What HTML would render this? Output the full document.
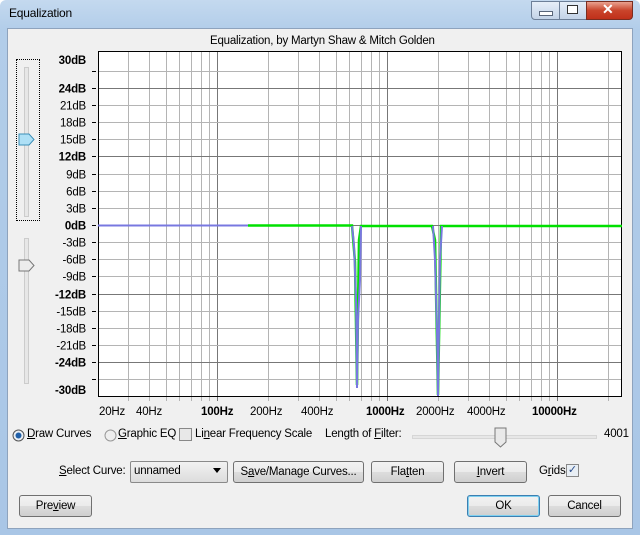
<!DOCTYPE html>
<html><head><style>
body{margin:0;width:640px;height:535px;overflow:hidden;background:#fff;font-family:"Liberation Sans",sans-serif;font-size:12px;position:relative}
.a{position:absolute}
.btn{position:absolute;height:20px;border:1px solid #707070;border-radius:3px;background:linear-gradient(#f2f2f2,#ebebeb 50%,#dddddd 51%,#cfcfcf);text-align:center;line-height:20px;font-size:11.5px;letter-spacing:-0.2px;color:#000;box-sizing:content-box}
.t{position:absolute;font-size:11.5px;letter-spacing:-0.2px;white-space:nowrap}
u{text-decoration:underline}
</style></head><body>
<div class="a" style="left:0;top:0;width:640px;height:535px;background:linear-gradient(#c4d9ef,#b2cde9 30px,#a9c6e6);border-radius:6px 6px 0 0"></div>
<div class="t" style="left:9px;top:6px;font-size:12px">Equalization</div>
<div class="a" style="left:531px;top:1px;width:28px;height:17px;border:1px solid #6d7f98;border-radius:0 0 0 4px;background:linear-gradient(#e6eef8,#c3d3e8)"></div>
<div class="a" style="left:539px;top:11px;width:12px;height:3px;background:#fff;border:1px solid #59667a"></div>
<div class="a" style="left:559px;top:1px;width:26px;height:17px;border:1px solid #6d7f98;background:linear-gradient(#e6eef8,#c3d3e8)"></div>
<div class="a" style="left:567px;top:5px;width:9px;height:7px;border:1px solid #333;background:#fff"></div>
<div class="a" style="left:586px;top:1px;width:45px;height:17px;border:1px solid #7a2d20;border-radius:0 0 4px 0;background:linear-gradient(#e9a18f,#c9442b 50%,#c0301a)"></div>
<div class="t" style="left:602px;top:1px;color:#fff;font-weight:bold;font-size:14px">✕</div>
<div class="a" style="left:7px;top:28px;width:624px;height:499px;background:#f0f0f0;border:1px solid #8ea3bd"></div>
<div class="t" style="left:210px;top:35px">Equalization, by Martyn Shaw &amp; Mitch Golden</div>
<div class="a" style="left:16px;top:59px;width:22px;height:160px;border:1px dotted #000"></div>
<div class="a" style="left:24px;top:67px;width:3px;height:148px;border:1px solid #ccc;background:#e7e7e7"></div>
<svg class="a" style="left:17px;top:133px" width="20" height="14"><path d="M2 1H12L17 6.5L12 12H2Z" fill="#aee0f6" stroke="#3c8fb8"/></svg>
<div class="a" style="left:24px;top:238px;width:3px;height:144px;border:1px solid #ccc;background:#e7e7e7"></div>
<svg class="a" style="left:17px;top:259px" width="20" height="14"><path d="M2 1H12L17 6.5L12 12H2Z" fill="#ececec" stroke="#777"/></svg>
<svg class="a" style="left:0;top:0" width="640" height="430" id="g"></svg>
<svg class="a" style="left:12px;top:429px" width="13" height="13"><circle cx="6.5" cy="6.5" r="5.5" fill="#e8eef4" stroke="#555"/><circle cx="6.5" cy="6.5" r="3" fill="#1f5fa8"/></svg>
<div class="t" style="left:27px;top:428px"><u>D</u>raw Curves</div>
<svg class="a" style="left:104px;top:429px" width="13" height="13"><circle cx="6.5" cy="6.5" r="5.5" fill="#eee" stroke="#999"/></svg>
<div class="t" style="left:118px;top:428px"><u>G</u>raphic EQ</div>
<div class="a" style="left:179px;top:428px;width:11px;height:11px;border:1px solid #888;background:#e8e8e8"></div>
<div class="t" style="left:195px;top:428px">Li<u>n</u>ear Frequency Scale</div>
<div class="t" style="left:325px;top:428px">Length of <u>F</u>ilter:</div>
<div class="a" style="left:412px;top:435px;width:183px;height:2px;border:1px solid #d6d6d6;background:#e7e7e7"></div>
<svg class="a" style="left:494px;top:427px" width="14" height="22"><path d="M1 1H12V15L6.5 20L1 15Z" fill="#e9e9e9" stroke="#777"/></svg>
<div class="t" style="left:604px;top:428px">4001</div>
<div class="t" style="left:59px;top:465px"><u>S</u>elect Curve:</div>
<div class="a" style="left:130px;top:461px;width:96px;height:20px;border:1px solid #8a8a8a;border-radius:2px;background:linear-gradient(#f2f2f2,#dcdcdc)"></div>
<div class="t" style="left:134px;top:465px">unnamed</div>
<svg class="a" style="left:213px;top:468px" width="9" height="6"><path d="M0 0H8L4 5Z" fill="#000"/></svg>
<div class="btn" style="left:233px;top:461px;width:129px">S<u>a</u>ve/Manage Curves...</div>
<div class="btn" style="left:371px;top:461px;width:71px">Fla<u>t</u>ten</div>
<div class="btn" style="left:454px;top:461px;width:71px"><u>I</u>nvert</div>
<div class="t" style="left:539px;top:465px">G<u>r</u>ids</div>
<div class="a" style="left:566px;top:464px;width:11px;height:11px;border:1px solid #888;background:#e8eef4;font-size:11px;line-height:11px;color:#2a4d8c;text-align:center">✓</div>
<div class="btn" style="left:19px;top:495px;width:71px">Pre<u>v</u>iew</div>
<div class="btn" style="left:467px;top:495px;width:71px;border-color:#3c7fb1;box-shadow:inset 0 0 0 1px #7fd0f0">OK</div>
<div class="btn" style="left:548px;top:495px;width:71px">Cancel</div>
<script>
var s='',L=98,R=622,T=51,B=397,z=225,k=5.72,F='font-size="11.5" letter-spacing="-0.2" font-family="Liberation Sans"';
function fx(f){return 217+170*Math.log10(f/100);}
[20,30,40,50,60,70,80,90,100,200,300,400,500,600,700,800,900,1000,2000,3000,4000,5000,6000,7000,8000,9000,10000,20000].forEach(function(f){var x=Math.round(fx(f))+.5;if(x<=L+1||x>=R)return;var m=(f==100||f==1000||f==10000);s+='<line x1="'+x+'" y1="'+T+'" x2="'+x+'" y2="'+(B+4)+'" stroke="'+(m?'#777':'#b4b4b4')+'"/>';});
for(var d=-27;d<=27;d+=3){var y=Math.round(z-d*k)+.5;var m=(d%12==0);s+='<line x1="'+L+'" y1="'+y+'" x2="'+R+'" y2="'+y+'" stroke="'+(m?'#777':'#b4b4b4')+'"/>';s+='<line x1="'+(L-6)+'" y1="'+y+'" x2="'+(L-2)+'" y2="'+y+'" stroke="#000"/>';
if(Math.abs(d)!=27){s+='<text x="86" y="'+(y+4)+'" text-anchor="end" '+F+' '+(m?'font-weight="bold"':'')+'>'+d+'dB</text>';}}
s+='<text x="86" y="64" text-anchor="end" font-weight="bold" '+F+'>30dB</text>';
s+='<text x="86" y="394" text-anchor="end" font-weight="bold" '+F+'>-30dB</text>';
s='<rect x="'+L+'" y="'+T+'" width="'+(R-L)+'" height="'+(B-T)+'" fill="#fff"/>'+s;
s+='<rect x="'+(L+.5)+'" y="'+(T+.5)+'" width="'+(R-L-1)+'" height="'+(B-T-1)+'" fill="none" stroke="#000"/>';
s+='<path d="M248 225.5H352L355 262L357 385L359 240L361 226H432L435 240L438 395L441 226H622" fill="none" stroke="#00e000" stroke-width="2.5"/>';
s+='<path d="M352 226L354 245L356 300L357 388L358 320L360 280L361 226" fill="none" stroke="#7878e0" stroke-width="2"/>';
s+='<path d="M433 226L435 260L437 330L438 396L440 260L442 226" fill="none" stroke="#7878e0" stroke-width="2"/>';
s+='<path d="M98 225.5H248" stroke="#7878e0" stroke-width="2"/>';
var fl=[['20Hz',99,0],['40Hz',136,0],['100Hz',201,1],['200Hz',250,0],['400Hz',301,0],['1000Hz',366,1],['2000Hz',416,0],['4000Hz',467,0],['10000Hz',532,1]];
fl.forEach(function(a){s+='<text x="'+a[1]+'" y="415" '+F+' '+(a[2]?'font-weight="bold"':'')+'>'+a[0]+'</text>';});
document.getElementById('g').innerHTML=s;
</script>
</body></html>
